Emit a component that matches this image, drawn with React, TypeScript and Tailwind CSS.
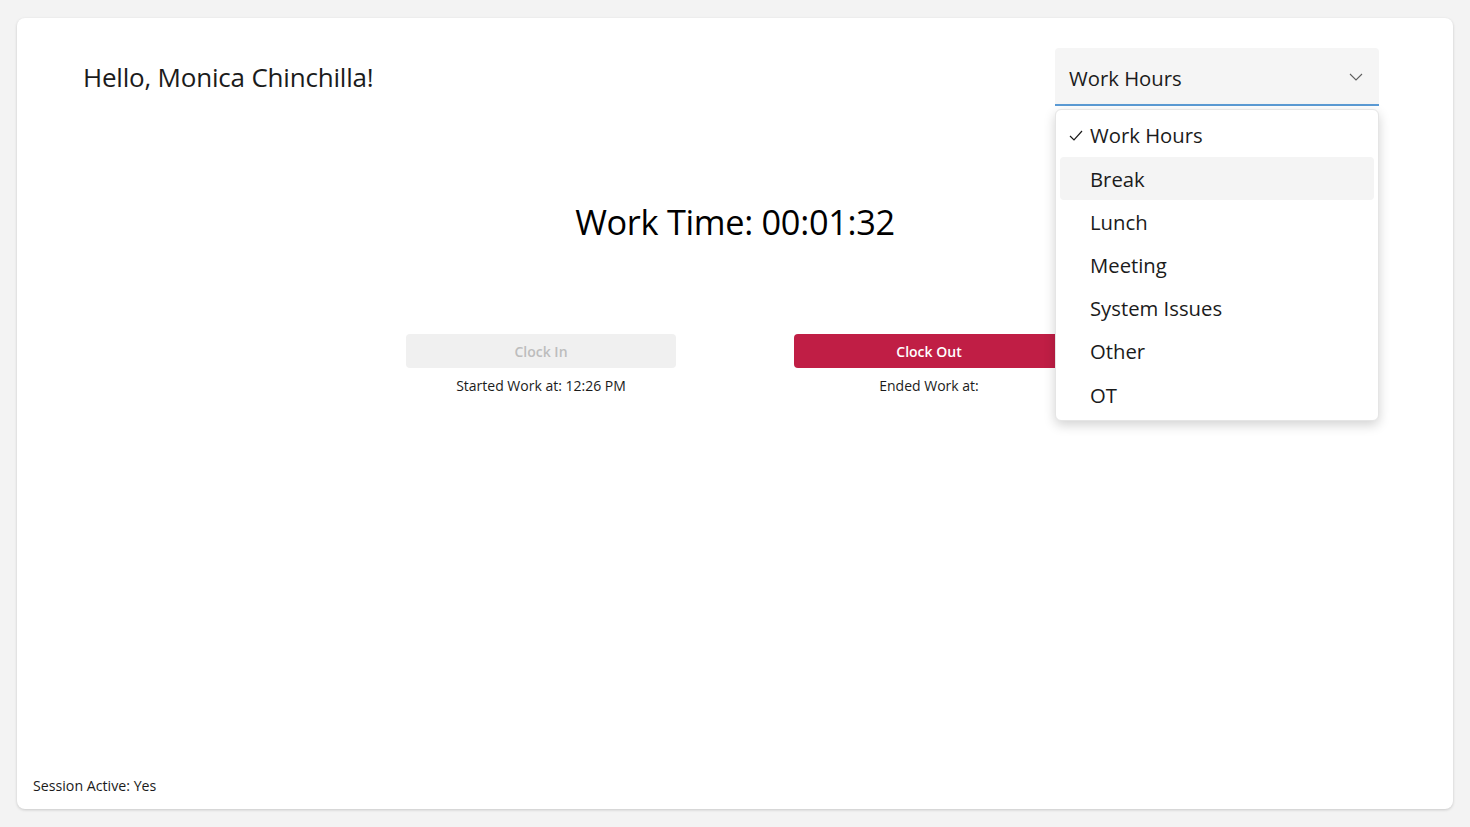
import React from "react";

const items = ["Work Hours", "Break", "Lunch", "Meeting", "System Issues", "Other", "OT"];

export default function App() {
  return (
    <div
      className="w-[1470px] h-[827px] bg-[#f3f3f3] pt-[18px] px-[17px] pb-[18px]"
      style={{ fontFamily: '"Open Sans", "Noto Sans", sans-serif' }}
    >
      <div className="relative h-[791px] bg-white rounded-[8px] shadow-[0_1px_3px_rgba(0,0,0,0.18)] flex flex-col">
        <div className="flex items-start justify-between pl-[66px] pr-[74px] pt-[30px]">
          <div className="text-[26px] text-[#1b1b1b] mt-[10px] tracking-[-0.2px]">Hello, Monica Chinchilla!</div>
          <div className="relative w-[324px]">
            <div className="h-[58px] bg-[#f5f5f5] rounded-t-[4px] border-b-2 border-[#5b9bd5] flex items-center justify-between pl-[14px] pr-[16px]">
              <span className="text-[20.3px] text-[#1b1b1b] mt-[5px]">Work Hours</span>
              <svg width="14" height="8" viewBox="0 0 14 8" fill="none" className="mt-[1px]">
                <path d="M1 1l6 6 6-6" stroke="#5f5f5f" strokeWidth="1.1" />
              </svg>
            </div>
            <div className="absolute left-0 top-[61px] w-[324px] bg-white rounded-[6px] shadow-[0_4px_12px_rgba(0,0,0,0.18)] border border-[#e5e5e5] px-[4px] pt-[4px] pb-[4px] z-10">
              {items.map((it, i) => (
                <div
                  key={it}
                  className={
                    "h-[43.2px] flex items-center rounded-[4px] " + (i === 1 ? "bg-[#f4f4f4]" : "")
                  }
                >
                  <div className="w-[30px] flex justify-center pl-[2px]">
                    {i === 0 && (
                      <svg width="14" height="11" viewBox="0 0 14 11" fill="none">
                        <path d="M1 6l4 4L13 1" stroke="#1b1b1b" strokeWidth="1.2" />
                      </svg>
                    )}
                  </div>
                  <span className="text-[20.3px] text-[#1b1b1b]">{it}</span>
                </div>
              ))}
            </div>
          </div>
        </div>

        <div className="flex justify-center mt-[90px]">
          <div className="text-[34.3px] text-black tracking-[-0.3px]">Work Time: 00:01:32</div>
        </div>

        <div className="flex justify-center gap-[118px] mt-[87px]">
          <div className="flex flex-col items-center w-[270px]">
            <button className="w-[270px] h-[34px] bg-[#f0f0f0] rounded-[4px] text-[14px] text-[#bdbdbd] font-semibold">
              Clock In
            </button>
            <div className="mt-[7px] text-[14px] text-[#1b1b1b]">Started Work at: 12:26 PM</div>
          </div>
          <div className="flex flex-col items-center w-[270px]">
            <button className="w-[270px] h-[34px] bg-[#c01e45] rounded-[4px] text-[14px] text-white font-semibold">
              Clock Out
            </button>
            <div className="mt-[7px] text-[14px] text-[#1b1b1b]">Ended Work at:</div>
          </div>
        </div>

        <div className="mt-auto pl-[16px] pb-[13px] text-[14.2px] text-[#1b1b1b]">Session Active: Yes</div>
      </div>
    </div>
  );
}
